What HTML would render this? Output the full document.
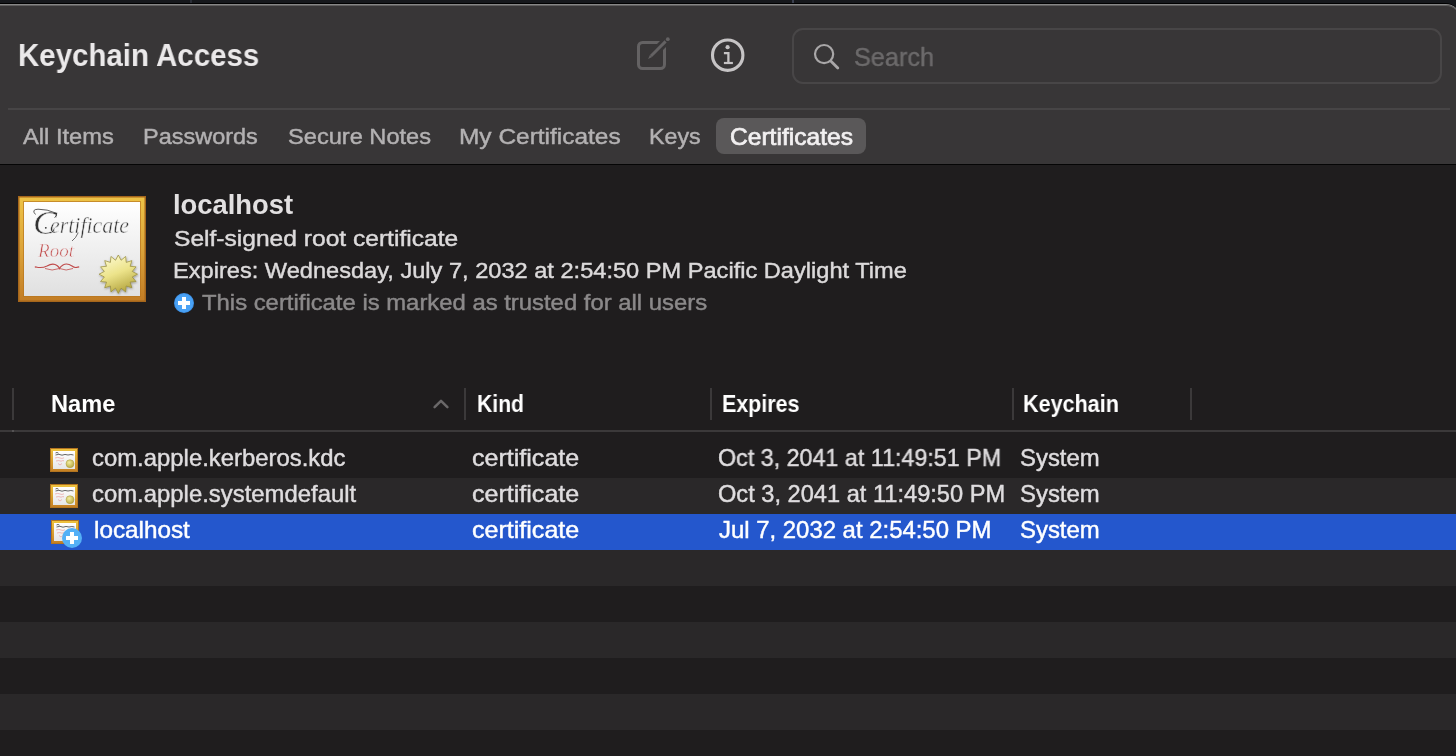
<!DOCTYPE html>
<html>
<head>
<meta charset="utf-8">
<style>
html,body{margin:0;padding:0;}
body{width:1456px;height:756px;overflow:hidden;position:relative;background:#16181c;font-family:"Liberation Sans",sans-serif;}
.abs{position:absolute;}
.tx{position:absolute;white-space:nowrap;transform-origin:0 0;}
#win{position:absolute;left:-40px;top:3px;width:1501px;height:800px;border-top-right-radius:16px;background:#000;overflow:hidden;}
#win2{position:absolute;left:0;top:1px;right:0;bottom:0;border-top-right-radius:15px;background:#878787;overflow:hidden;}
#tb{position:absolute;left:0;top:1px;right:1px;height:159px;background:#383637;border-top-right-radius:14px;box-shadow:inset 0 1px 0 #5f5e5e;}
.row{position:absolute;left:0;width:1456px;height:36px;}
.sep{position:absolute;top:388px;width:2px;height:32px;background:#3b393a;}
</style>
</head>
<body>
<!-- underlying windows strip -->
<div class="abs" style="left:190px;top:0;width:2px;height:3px;background:#2a2e37"></div>
<div class="abs" style="left:792px;top:0;width:2px;height:3px;background:#3a3f4e"></div>

<div id="win"><div id="win2">
  <div id="tb"></div>
  <div style="position:absolute;left:0;right:1px;top:160px;bottom:0;background:#1f1d1e"></div>
</div></div>

<!-- toolbar bottom black line -->
<div class="abs" style="left:0;top:164px;width:1456px;height:1px;background:#050505"></div>
<!-- divider -->
<div class="abs" style="left:8px;top:108px;width:1442px;height:2px;background:#474546"></div>

<!-- compose icon -->
<svg class="abs" style="left:630px;top:30px" width="46" height="46" viewBox="630 30 46 46">
  <rect x="638.5" y="42.5" width="26" height="26" rx="4" ry="4" fill="none" stroke="#646263" stroke-width="3"/>
  <path d="M644 63 L676 31" stroke="#383637" stroke-width="8.5"/>
  <path d="M651 56 L665.6 41.4" stroke="#646263" stroke-width="2.9"/>
  <polygon points="648.1,58.9 649.9,54.9 652.1,57.1" fill="#646263"/>
  <circle cx="667.8" cy="39.2" r="1.9" fill="#646263"/>
</svg>
<!-- info icon -->
<svg class="abs" style="left:700px;top:28px" width="56" height="56" viewBox="700 28 56 56">
  <circle cx="727.7" cy="55.2" r="15.2" fill="none" stroke="#c6c4c5" stroke-width="3.1"/>
  <circle cx="727.6" cy="47.2" r="2.1" fill="#c6c4c5"/>
  <path d="M723.9 53.2 H728.4 V62.5" fill="none" stroke="#c6c4c5" stroke-width="2.3"/>
  <path d="M723.9 63 H732.9" fill="none" stroke="#c6c4c5" stroke-width="2.2"/>
</svg>

<!-- search field -->
<div class="abs" style="left:792px;top:28px;width:650px;height:56px;box-sizing:border-box;border:2px solid #484647;border-radius:11px;"></div>
<svg class="abs" style="left:805px;top:35px" width="45" height="45" viewBox="805 35 45 45">
  <circle cx="824.1" cy="54.1" r="9.1" fill="none" stroke="#a9a7a8" stroke-width="2.2"/>
  <path d="M831 61.2 L837.8 68" stroke="#a9a7a8" stroke-width="2.8" stroke-linecap="round"/>
</svg>

<!-- selected tab pill -->
<div class="abs" style="left:716px;top:118px;width:150px;height:36px;border-radius:8px;background:#5a5859"></div>

<!-- big certificate icon -->
<svg class="abs" style="left:14px;top:192px;will-change:transform" width="136" height="114" viewBox="14 192 136 114">
  <defs>
    <linearGradient id="fr" x1="0" y1="0" x2="0" y2="1">
      <stop offset="0" stop-color="#eec447"/>
      <stop offset="0.5" stop-color="#dca43a"/>
      <stop offset="1" stop-color="#c27c24"/>
    </linearGradient>
    <linearGradient id="pp" x1="0" y1="0" x2="0" y2="1">
      <stop offset="0" stop-color="#ffffff"/>
      <stop offset="1" stop-color="#e0e0e0"/>
    </linearGradient>
    <linearGradient id="seal" x1="0.2" y1="0" x2="0.6" y2="1">
      <stop offset="0" stop-color="#fdfad0"/>
      <stop offset="0.5" stop-color="#ece38a"/>
      <stop offset="1" stop-color="#b3a43e"/>
    </linearGradient>
    <filter id="sh" x="-30%" y="-30%" width="160%" height="160%"><feDropShadow dx="0.5" dy="1" stdDeviation="1" flood-color="#000" flood-opacity="0.35"/></filter>
  </defs>
  <rect x="18" y="196" width="128" height="106" fill="url(#fr)"/>
  <rect x="18.75" y="196.75" width="126.5" height="104.5" fill="none" stroke="#a5661c" stroke-width="1.5"/>
  <rect x="23.5" y="201.5" width="117" height="95" fill="none" stroke="#b87620" stroke-opacity="0.7" stroke-width="1"/>
  <rect x="24" y="202" width="116" height="94" fill="url(#pp)"/>
  <g stroke="#f2f2f2" stroke-width="0.55" paint-order="normal">
  <text x="33" y="233.5" font-family="Liberation Serif" font-style="italic" font-size="33" fill="#333" textLength="24" lengthAdjust="spacingAndGlyphs">C</text>
  <text x="50" y="233" font-family="Liberation Serif" font-style="italic" font-size="24" fill="#333" textLength="79" lengthAdjust="spacingAndGlyphs">ertificate</text>
  <text x="38" y="257" font-family="Liberation Serif" font-style="italic" font-size="19" fill="#c04a4a" textLength="36" lengthAdjust="spacingAndGlyphs">Root</text>
  </g>
  <path d="M35.5 214.5 Q31 209.5 38 209.2 Q47 209 56.5 213.3 Q57 216.5 54.5 217.5" fill="none" stroke="#333" stroke-width="0.8"/>
  <circle cx="45.8" cy="227.8" r="0.9" fill="#333"/>
  <path d="M72 241 Q76 238 78 233" fill="none" stroke="#333" stroke-width="0.7"/>
  <path d="M36 267 Q42 268.5 47 266 Q53 262.5 57 265.5 Q59 267 59.5 268.5 Q60.5 266.5 63 265 Q67 262.5 72 266 Q75 268.5 78 267" fill="none" stroke="#c04a4a" stroke-width="1.1"/>
  <path d="M45 268.5 Q52 271.5 59.5 268.5 Q66 271.5 73 268.5" fill="none" stroke="#c04a4a" stroke-width="0.8"/>
  <circle cx="35.5" cy="267" r="0.8" fill="#c04a4a"/><circle cx="78.5" cy="267" r="0.8" fill="#c04a4a"/>
  <polygon id="star" fill="url(#seal)" stroke="#958a36" stroke-width="0.7" filter="url(#sh)" points="118.30,255.00 121.07,260.27 125.65,256.46 126.19,262.39 131.88,260.62 130.11,266.31 136.04,266.85 132.23,271.43 137.50,274.20 132.23,276.97 136.04,281.55 130.11,282.09 131.88,287.78 126.19,286.01 125.65,291.94 121.07,288.13 118.30,293.40 115.53,288.13 110.95,291.94 110.41,286.01 104.72,287.78 106.49,282.09 100.56,281.55 104.37,276.97 99.10,274.20 104.37,271.43 100.56,266.85 106.49,266.31 104.72,260.62 110.41,262.39 110.95,256.46 115.53,260.27"/>
</svg>

<!-- info rows under header -->
<svg class="abs" style="left:172px;top:291px" width="24" height="24" viewBox="172 291 24 24">
  <circle cx="184" cy="303" r="10" fill="#3f95ec"/>
  <circle cx="184" cy="303" r="9" fill="#4aa2f5"/>
  <rect x="178" y="301" width="12" height="4" fill="#fff"/>
  <rect x="182" y="297" width="4" height="12" fill="#fff"/>
</svg>

<!-- table -->
<div class="row" style="top:478px;background:#2a2829"></div>
<div class="row" style="top:514px;background:#2457cd"></div>
<div class="row" style="top:550px;background:#2a2829"></div>
<div class="row" style="top:622px;background:#2a2829"></div>
<div class="row" style="top:694px;background:#2a2829"></div>

<div class="sep" style="left:12px"></div>
<div class="sep" style="left:464px"></div>
<div class="sep" style="left:710px"></div>
<div class="sep" style="left:1012px"></div>
<div class="sep" style="left:1190px"></div>
<div class="abs" style="left:0;top:430px;width:1456px;height:2px;background:#3b393a"></div>
<div class="abs" style="left:12px;top:430px;width:2px;height:2px;background:#555354"></div>
<svg class="abs" style="left:428px;top:394px" width="26" height="20" viewBox="428 394 26 20">
  <path d="M434.6 407.2 L441 400.8 L447.4 407.2" fill="none" stroke="#6a6869" stroke-width="2.5" stroke-linecap="round" stroke-linejoin="round"/>
</svg>

<!-- small cert icons -->
<svg class="abs" style="left:50px;top:448px" width="28" height="24" viewBox="0 0 28 24">
  <defs><linearGradient id="sf1" x1="0" y1="0" x2="0" y2="1"><stop offset="0" stop-color="#f0c640"/><stop offset="1" stop-color="#c47d22"/></linearGradient>
  <linearGradient id="sp1" x1="0" y1="0" x2="0" y2="1"><stop offset="0" stop-color="#ffffff"/><stop offset="1" stop-color="#e6e6e6"/></linearGradient><radialGradient id="ss1" cx="0.4" cy="0.35" r="0.7"><stop offset="0" stop-color="#f4eea0"/><stop offset="1" stop-color="#b5a640"/></radialGradient></defs>
  <rect x="0" y="0" width="28" height="24" fill="url(#sf1)"/>
  <rect x="0.5" y="0.5" width="27" height="23" fill="none" stroke="#b27420" stroke-width="1"/>
  <rect x="3" y="3" width="22" height="18" fill="url(#sp1)"/>
  <path d="M5.5 5 Q7 3.8 8.5 5.2 M5.5 7 Q9 5.5 12 7.2 Q15 5.8 18 7 Q21 6 23.5 7" fill="none" stroke="#666" stroke-width="1"/>
  <path d="M5 10 Q8 8.8 10 10 Q12 11 14 9.8 M6 13 Q9 12 11 13.2 Q13 12.2 14 12.8 M8 15.5 L10 17 L12 15.5" fill="none" stroke="#eaa8a8" stroke-width="0.8"/>
  <circle cx="20" cy="15.7" r="4" fill="url(#ss1)" stroke="#a89a3c" stroke-width="0.5"/>
</svg>
<svg class="abs" style="left:50px;top:484px" width="28" height="24" viewBox="0 0 28 24">
  <defs><linearGradient id="sf2" x1="0" y1="0" x2="0" y2="1"><stop offset="0" stop-color="#f0c640"/><stop offset="1" stop-color="#c47d22"/></linearGradient>
  <linearGradient id="sp2" x1="0" y1="0" x2="0" y2="1"><stop offset="0" stop-color="#ffffff"/><stop offset="1" stop-color="#e6e6e6"/></linearGradient><radialGradient id="ss2" cx="0.4" cy="0.35" r="0.7"><stop offset="0" stop-color="#f4eea0"/><stop offset="1" stop-color="#b5a640"/></radialGradient></defs>
  <rect x="0" y="0" width="28" height="24" fill="url(#sf2)"/>
  <rect x="0.5" y="0.5" width="27" height="23" fill="none" stroke="#b27420" stroke-width="1"/>
  <rect x="3" y="3" width="22" height="18" fill="url(#sp2)"/>
  <path d="M5.5 5 Q7 3.8 8.5 5.2 M5.5 7 Q9 5.5 12 7.2 Q15 5.8 18 7 Q21 6 23.5 7" fill="none" stroke="#666" stroke-width="1"/>
  <path d="M5 10 Q8 8.8 10 10 Q12 11 14 9.8 M6 13 Q9 12 11 13.2 Q13 12.2 14 12.8 M8 15.5 L10 17 L12 15.5" fill="none" stroke="#eaa8a8" stroke-width="0.8"/>
  <circle cx="20" cy="15.7" r="4" fill="url(#ss2)" stroke="#a89a3c" stroke-width="0.5"/>
</svg>
<svg class="abs" style="left:51px;top:520px" width="28" height="24" viewBox="0 0 28 24">
  <defs><linearGradient id="sf3" x1="0" y1="0" x2="0" y2="1"><stop offset="0" stop-color="#f0c640"/><stop offset="1" stop-color="#c47d22"/></linearGradient>
  <linearGradient id="sp3" x1="0" y1="0" x2="0" y2="1"><stop offset="0" stop-color="#ffffff"/><stop offset="1" stop-color="#e6e6e6"/></linearGradient><radialGradient id="ss3" cx="0.4" cy="0.35" r="0.7"><stop offset="0" stop-color="#f4eea0"/><stop offset="1" stop-color="#b5a640"/></radialGradient></defs>
  <rect x="0" y="0" width="28" height="24" fill="url(#sf3)"/>
  <rect x="0.5" y="0.5" width="27" height="23" fill="none" stroke="#b27420" stroke-width="1"/>
  <rect x="3" y="3" width="22" height="18" fill="url(#sp3)"/>
  <path d="M5.5 5 Q7 3.8 8.5 5.2 M5.5 7 Q9 5.5 12 7.2 Q15 5.8 18 7 Q21 6 23.5 7" fill="none" stroke="#666" stroke-width="1"/>
  <path d="M5 10 Q8 8.8 10 10 Q12 11 14 9.8 M6 13 Q9 12 11 13.2 Q13 12.2 14 12.8 M8 15.5 L10 17 L12 15.5" fill="none" stroke="#eaa8a8" stroke-width="0.8"/>
  <circle cx="20" cy="15.7" r="4" fill="url(#ss3)" stroke="#a89a3c" stroke-width="0.5"/>
</svg>

<svg class="abs" style="left:60px;top:526px" width="24" height="24" viewBox="60 526 24 24">
  <circle cx="72" cy="538" r="10" fill="#54b0f6"/>
  <rect x="66" y="536" width="12" height="4" fill="#fff"/>
  <rect x="70" y="532" width="4" height="12" fill="#fff"/>
</svg>

<div class="tx" style="will-change:transform;left:17.94px;top:38.80px;font-size:32px;line-height:32px;font-weight:700;font-family:'Liberation Sans';font-style:normal;color:#ebe9ea;transform:scaleX(0.9205);">Keychain Access</div>
<div class="tx" style="will-change:transform;left:23.00px;top:125.96px;font-size:22.4px;line-height:22.4px;font-weight:400;font-family:'Liberation Sans';font-style:normal;color:#b3b1b2;transform:scaleX(1.0573);-webkit-text-stroke:0.45px #b3b1b2;">All Items</div>
<div class="tx" style="will-change:transform;left:143.12px;top:125.96px;font-size:22.4px;line-height:22.4px;font-weight:400;font-family:'Liberation Sans';font-style:normal;color:#b3b1b2;transform:scaleX(1.0482);-webkit-text-stroke:0.45px #b3b1b2;">Passwords</div>
<div class="tx" style="will-change:transform;left:287.82px;top:125.96px;font-size:22.4px;line-height:22.4px;font-weight:400;font-family:'Liberation Sans';font-style:normal;color:#b3b1b2;transform:scaleX(1.0544);-webkit-text-stroke:0.45px #b3b1b2;">Secure Notes</div>
<div class="tx" style="will-change:transform;left:459.04px;top:125.96px;font-size:22.4px;line-height:22.4px;font-weight:400;font-family:'Liberation Sans';font-style:normal;color:#b3b1b2;transform:scaleX(1.0920);-webkit-text-stroke:0.45px #b3b1b2;">My Certificates</div>
<div class="tx" style="will-change:transform;left:649.14px;top:125.96px;font-size:22.4px;line-height:22.4px;font-weight:400;font-family:'Liberation Sans';font-style:normal;color:#b3b1b2;transform:scaleX(1.0367);-webkit-text-stroke:0.45px #b3b1b2;">Keys</div>
<div class="tx" style="will-change:transform;left:729.77px;top:125.94px;font-size:23.6px;line-height:23.6px;font-weight:400;font-family:'Liberation Sans';font-style:normal;color:#f2f0f1;transform:scaleX(1.0421);-webkit-text-stroke:0.7px #f2f0f1;">Certificates</div>
<div class="tx" style="will-change:transform;left:853.74px;top:43.90px;font-size:26px;line-height:26px;font-weight:400;font-family:'Liberation Sans';font-style:normal;color:#6c6a6b;transform:scaleX(0.9710);-webkit-text-stroke:0.45px #6c6a6b;">Search</div>
<div class="tx" style="will-change:transform;left:173.08px;top:190.88px;font-size:27.2px;line-height:27.2px;font-weight:700;font-family:'Liberation Sans';font-style:normal;color:#e2e0e1;transform:scaleX(1.0066);">localhost</div>
<div class="tx" style="will-change:transform;left:173.77px;top:227.96px;font-size:22.4px;line-height:22.4px;font-weight:400;font-family:'Liberation Sans';font-style:normal;color:#dcdadb;transform:scaleX(1.0976);-webkit-text-stroke:0.45px #dcdadb;">Self-signed root certificate</div>
<div class="tx" style="will-change:transform;left:173.11px;top:259.96px;font-size:22.4px;line-height:22.4px;font-weight:400;font-family:'Liberation Sans';font-style:normal;color:#dcdadb;transform:scaleX(1.0541);-webkit-text-stroke:0.45px #dcdadb;">Expires: Wednesday, July 7, 2032 at 2:54:50 PM Pacific Daylight Time</div>
<div class="tx" style="will-change:transform;left:201.52px;top:291.96px;font-size:22.4px;line-height:22.4px;font-weight:400;font-family:'Liberation Sans';font-style:normal;color:#8b898a;transform:scaleX(1.0653);-webkit-text-stroke:0.45px #8b898a;">This certificate is marked as trusted for all users</div>
<div class="tx" style="will-change:transform;left:51.34px;top:393.28px;font-size:23.2px;line-height:23.2px;font-weight:700;font-family:'Liberation Sans';font-style:normal;color:#ffffff;transform:scaleX(1.0200);">Name</div>
<div class="tx" style="will-change:transform;left:476.52px;top:393.28px;font-size:23.2px;line-height:23.2px;font-weight:700;font-family:'Liberation Sans';font-style:normal;color:#ffffff;transform:scaleX(0.9118);">Kind</div>
<div class="tx" style="will-change:transform;left:721.50px;top:393.28px;font-size:23.2px;line-height:23.2px;font-weight:700;font-family:'Liberation Sans';font-style:normal;color:#ffffff;transform:scaleX(0.9236);">Expires</div>
<div class="tx" style="will-change:transform;left:1023.49px;top:393.28px;font-size:23.2px;line-height:23.2px;font-weight:700;font-family:'Liberation Sans';font-style:normal;color:#ffffff;transform:scaleX(0.9301);">Keychain</div>
<div class="tx" style="will-change:transform;left:92.04px;top:446.94px;font-size:23.6px;line-height:23.6px;font-weight:400;font-family:'Liberation Sans';font-style:normal;color:#dfdddf;transform:scaleX(1.0121);-webkit-text-stroke:0.45px #dfdddf;">com.apple.kerberos.kdc</div>
<div class="tx" style="will-change:transform;left:92.04px;top:482.94px;font-size:23.6px;line-height:23.6px;font-weight:400;font-family:'Liberation Sans';font-style:normal;color:#dfdddf;transform:scaleX(1.0122);-webkit-text-stroke:0.45px #dfdddf;">com.apple.systemdefault</div>
<div class="tx" style="will-change:transform;left:94.30px;top:518.94px;font-size:23.6px;line-height:23.6px;font-weight:400;font-family:'Liberation Sans';font-style:normal;color:#ffffff;transform:scaleX(1.0292);-webkit-text-stroke:0.45px #ffffff;">localhost</div>
<div class="tx" style="will-change:transform;left:472.00px;top:446.94px;font-size:23.6px;line-height:23.6px;font-weight:400;font-family:'Liberation Sans';font-style:normal;color:#dfdddf;transform:scaleX(1.0619);-webkit-text-stroke:0.45px #dfdddf;">certificate</div>
<div class="tx" style="will-change:transform;left:472.00px;top:482.94px;font-size:23.6px;line-height:23.6px;font-weight:400;font-family:'Liberation Sans';font-style:normal;color:#dfdddf;transform:scaleX(1.0619);-webkit-text-stroke:0.45px #dfdddf;">certificate</div>
<div class="tx" style="will-change:transform;left:472.00px;top:518.94px;font-size:23.6px;line-height:23.6px;font-weight:400;font-family:'Liberation Sans';font-style:normal;color:#ffffff;transform:scaleX(1.0619);-webkit-text-stroke:0.45px #ffffff;">certificate</div>
<div class="tx" style="will-change:transform;left:717.84px;top:446.94px;font-size:23.6px;line-height:23.6px;font-weight:400;font-family:'Liberation Sans';font-style:normal;color:#dfdddf;transform:scaleX(0.9871);-webkit-text-stroke:0.45px #dfdddf;">Oct 3, 2041 at 11:49:51 PM</div>
<div class="tx" style="will-change:transform;left:717.82px;top:482.94px;font-size:23.6px;line-height:23.6px;font-weight:400;font-family:'Liberation Sans';font-style:normal;color:#dfdddf;transform:scaleX(1.0012);-webkit-text-stroke:0.45px #dfdddf;">Oct 3, 2041 at 11:49:50 PM</div>
<div class="tx" style="will-change:transform;left:718.52px;top:518.94px;font-size:23.6px;line-height:23.6px;font-weight:400;font-family:'Liberation Sans';font-style:normal;color:#ffffff;transform:scaleX(1.0133);-webkit-text-stroke:0.45px #ffffff;">Jul 7, 2032 at 2:54:50 PM</div>
<div class="tx" style="will-change:transform;left:1019.80px;top:446.94px;font-size:23.6px;line-height:23.6px;font-weight:400;font-family:'Liberation Sans';font-style:normal;color:#dfdddf;transform:scaleX(1.0133);-webkit-text-stroke:0.45px #dfdddf;">System</div>
<div class="tx" style="will-change:transform;left:1019.80px;top:482.94px;font-size:23.6px;line-height:23.6px;font-weight:400;font-family:'Liberation Sans';font-style:normal;color:#dfdddf;transform:scaleX(1.0133);-webkit-text-stroke:0.45px #dfdddf;">System</div>
<div class="tx" style="will-change:transform;left:1019.80px;top:518.94px;font-size:23.6px;line-height:23.6px;font-weight:400;font-family:'Liberation Sans';font-style:normal;color:#ffffff;transform:scaleX(1.0133);-webkit-text-stroke:0.45px #ffffff;">System</div>
</body>
</html>
